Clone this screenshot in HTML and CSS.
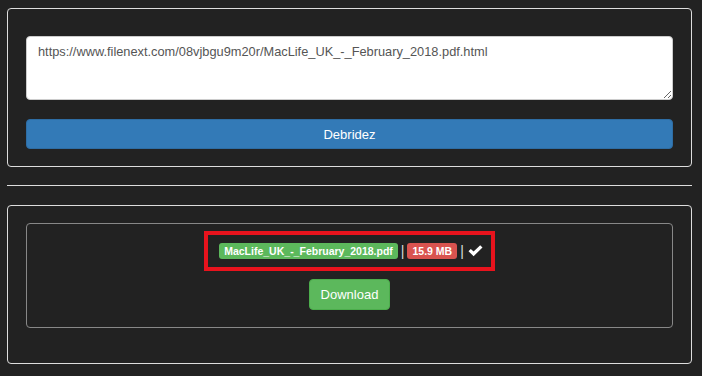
FILE: index.html
```html
<!DOCTYPE html>
<html lang="fr">
<head>
    <meta charset="UTF-8">
    <meta name="viewport" content="width=device-width, initial-scale=1.0">
    <title>Debrideur</title>
    <link rel="stylesheet" href="styles.css">
</head>
<body>
    <div class="page">
        <div class="panel">
            <form class="debrid-form" action="" method="post">
                <textarea class="links" name="links">https://www.filenext.com/08vjbgu9m20r/MacLife_UK_-_February_2018.pdf.html</textarea>
                <button type="button" class="btn btn-primary">Debridez</button>
            </form>
        </div>

        <hr class="sep">

        <div class="panel panel-result">
            <div class="result">
                <div class="highlight">
                    <span class="label label-success">MacLife_UK_-_February_2018.pdf</span>
                    <span class="pipe">|</span>
                    <span class="label label-danger">15.9 MB</span>
                    <span class="pipe">|</span>
                    <svg class="ok" width="15" height="12" viewBox="0 0 15 12">
                        <path d="M0.5 6.2 L2.8 4 L5.6 6.6 L12.2 0.3 L14.5 2.6 L5.6 11.2 Z" fill="#fff"/>
                    </svg>
                </div>
                <div>
                    <a class="btn btn-success" href="#">Download</a>
                </div>
            </div>
        </div>
    </div>
</body>
</html>
```

FILE: styles.css
```css
*{
    box-sizing: border-box;
}
body{
    margin: 0;
    background-color: #222;
    font-family: "Liberation Sans", Arial, sans-serif;
    font-size: 14px;
    color: #ddd;
}
.page{
    width: 685px;
    margin-left: 7px;
    padding-top: 8px;
}
.panel{
    border: 1px solid #ddd;
    border-radius: 4px;
    padding: 27px 18px 17px;
}
.debrid-form{
    display: flex;
    flex-direction: column;
    gap: 19px;
    margin: 0;
}
.links{
    display: block;
    width: 100%;
    height: 64px;
    margin: 0;
    padding: 6px 11px;
    border: 1px solid #ccc;
    border-radius: 4px;
    background-color: #fff;
    color: #555;
    font-family: "Liberation Sans", Arial, sans-serif;
    font-size: 12.8px;
    line-height: 18px;
}
.btn{
    display: inline-block;
    border: 1px solid transparent;
    border-radius: 4px;
    color: #fff;
    font-family: "Liberation Sans", Arial, sans-serif;
    font-size: 13px;
    text-align: center;
    text-decoration: none;
}
.btn-primary{
    width: 100%;
    height: 30px;
    padding: 0;
    background-color: #337ab7;
    border-color: #2e6da4;
}
.sep{
    margin: 18px 0 19px;
    border: 0;
    border-top: 1px solid #ddd;
}
.panel-result{
    padding: 17px 18px 35px;
}
.result{
    border: 1px solid #888;
    border-radius: 4px;
    padding: 7px 0 17px;
    text-align: center;
}
.highlight{
    display: inline-block;
    border: 4px solid #e8131d;
    padding: 6px 8px 6px 11px;
    line-height: 20px;
    font-size: 0;
}
.label{
    display: inline-block;
    height: 16px;
    padding: 0 5px;
    border-radius: 3px;
    color: #fff;
    font-size: 10.5px;
    font-weight: bold;
    line-height: 16px;
    vertical-align: middle;
}
.label-success{
    background-color: #5cb85c;
}
.label-danger{
    background-color: #d9534f;
}
.pipe{
    display: inline-block;
    margin: 0 3px;
    font-size: 14px;
    color: #ddd;
    vertical-align: middle;
}
.ok{
    vertical-align: middle;
    margin-left: 1px;
}
.btn-success{
    margin-top: 8px;
    padding: 6px 11px;
    line-height: 17px;
    background-color: #5cb85c;
    border-color: #4cae4c;
}
```
